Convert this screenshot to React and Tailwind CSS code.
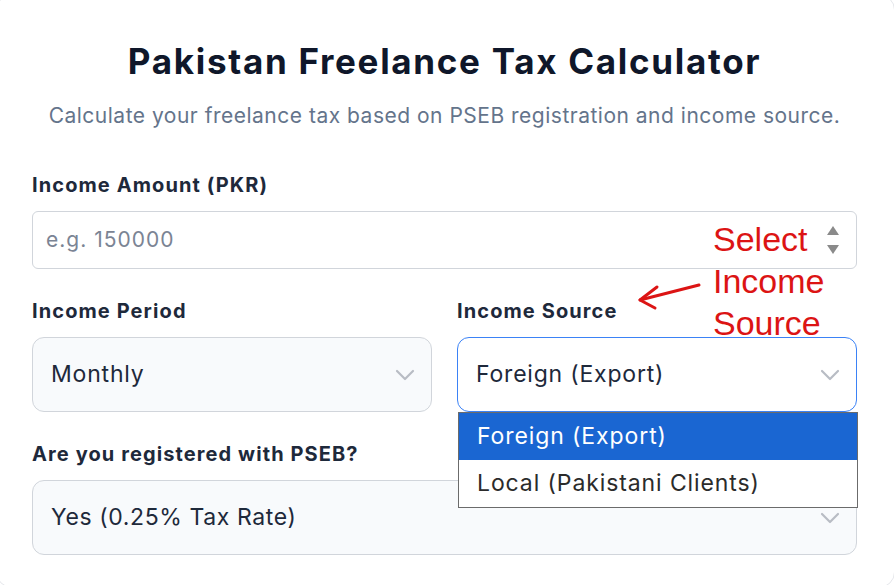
import React from 'react';

const Chevron = () => (
    <svg width="20" height="12" viewBox="0 0 20 12" fill="none" className="shrink-0">
        <polyline points="2,2 10,10 18,2" stroke="#b8bcc4" strokeWidth="2.2" strokeLinecap="round" strokeLinejoin="round" />
    </svg>
);

const Label = ({ children }) => (
    <div className="text-[20px] leading-[24px] font-bold text-[#1e293b] tracking-[1.1px]">{children}</div>
);

export default function App() {
    return (
        <div className="min-h-screen bg-white overflow-hidden" style={{ fontFamily: 'Inter, "Noto Sans", sans-serif' }}>
            <div className="relative w-[899px] -ml-1 -mt-[6px] rounded-2xl border border-gray-200 bg-white pl-[35px] pr-[37px] pt-[44px] pb-8">
                {/* Header */}
                <h1 className="text-center text-[35px] leading-[44px] font-bold text-[#0f172a] tracking-[1.7px]">
                    Pakistan Freelance Tax Calculator
                </h1>
                <p className="mt-[19px] text-center text-[21px] leading-[28px] text-[#64748b] tracking-[0.5px]">
                    Calculate your freelance tax based on PSEB registration and income source.
                </p>

                {/* Income amount */}
                <div className="mt-[43px]">
                    <Label>Income Amount (PKR)</Label>
                    <div className="mt-[14px] h-[58px] flex items-center justify-between rounded-md border border-[#d1d5db] bg-white pl-[13px] pr-[16px]">
                        <span className="text-[21px] text-[#7b8494] tracking-[1px]">e.g. 150000</span>
                        <svg width="14" height="30" viewBox="0 0 14 30">
                            <polygon points="7,1 13,10 1,10" fill="#8a8a8a" />
                            <polygon points="1,20 13,20 7,29" fill="#8a8a8a" />
                        </svg>
                    </div>
                </div>

                {/* Period / Source */}
                <div className="mt-[30px] grid grid-cols-2 gap-[25px]">
                    <div>
                        <Label>Income Period</Label>
                        <div className="mt-[14px] h-[75px] flex items-center justify-between rounded-xl border border-[#d1d5db] bg-[#f8fafc] pl-[18px] pr-[16px]">
                            <span className="text-[23px] text-[#1e293b] tracking-[0.8px]">Monthly</span>
                            <Chevron />
                        </div>
                    </div>
                    <div>
                        <Label>Income Source</Label>
                        <div className="relative mt-[14px]">
                            <div className="h-[75px] flex items-center justify-between rounded-xl border border-[#3b82f6] bg-white pl-[18px] pr-[16px]">
                                <span className="text-[23px] text-[#1e293b] tracking-[0.8px]">Foreign (Export)</span>
                                <Chevron />
                            </div>
                            {/* Open dropdown */}
                            <div className="absolute left-[1px] top-full z-10 w-[400px] border border-[#6b6b6b] bg-white text-[23px] tracking-[0.9px]">
                                <div className="h-[47px] flex items-center bg-[#1a66d2] pl-[18px] text-white">Foreign (Export)</div>
                                <div className="h-[47px] flex items-center pl-[18px] text-[#2b2b2b]">Local (Pakistani Clients)</div>
                            </div>
                        </div>
                    </div>
                </div>

                {/* PSEB */}
                <div className="mt-[30px]">
                    <Label>Are you registered with PSEB?</Label>
                    <div className="mt-[14px] h-[75px] flex items-center justify-between rounded-xl border border-[#d1d5db] bg-[#f8fafc] pl-[18px] pr-[16px]">
                        <span className="text-[23px] text-[#1e293b] tracking-[0.6px]">Yes (0.25% Tax Rate)</span>
                        <Chevron />
                    </div>
                </div>

                {/* Annotation overlay */}
                <div
                    className="absolute left-[716px] top-[223px] z-20 text-[34px] leading-[42px] text-[#dc1414]"
                    style={{ fontFamily: '"Liberation Sans", Arial, sans-serif' }}
                >
                    <div>Select</div>
                    <div>Income</div>
                    <div>Source</div>
                </div>
                <svg className="absolute left-[634px] top-[281px] z-20" width="80" height="40" viewBox="0 0 80 40" fill="none">
                    <path d="M68 9 L9 24" stroke="#dc1414" strokeWidth="3" strokeLinecap="round" />
                    <path d="M26 11 L9 24 L24 32" stroke="#dc1414" strokeWidth="3" strokeLinecap="round" strokeLinejoin="round" />
                </svg>
            </div>
        </div>
    );
}
